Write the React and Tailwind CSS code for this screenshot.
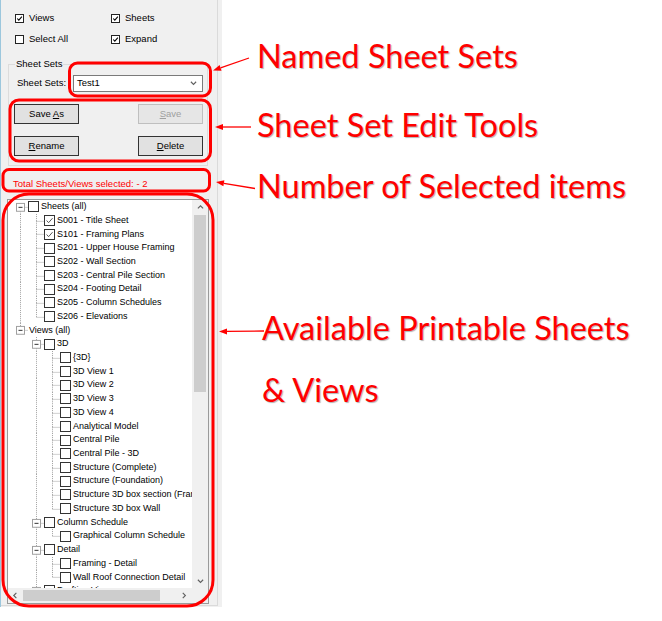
import React from "react";

const TREE = [
  {
    label: "Sheets (all)",
    open: true,
    children: [
      { label: "S001 - Title Sheet", checked: true },
      { label: "S101 - Framing Plans", checked: true },
      { label: "S201 - Upper House Framing" },
      { label: "S202 - Wall Section" },
      { label: "S203 - Central Pile Section" },
      { label: "S204 - Footing Detail" },
      { label: "S205 - Column Schedules" },
      { label: "S206 - Elevations" },
    ],
  },
  {
    label: "Views (all)",
    noBox: true,
    open: true,
    children: [
      {
        label: "3D",
        open: true,
        children: [
          "{3D}",
          "3D View 1",
          "3D View 2",
          "3D View 3",
          "3D View 4",
          "Analytical Model",
          "Central Pile",
          "Central Pile - 3D",
          "Structure (Complete)",
          "Structure (Foundation)",
          "Structure 3D box section (Framing)",
          "Structure 3D box Wall",
        ].map((label) => ({ label })),
      },
      { label: "Column Schedule", open: true, children: [{ label: "Graphical Column Schedule" }] },
      { label: "Detail", open: true, children: [{ label: "Framing - Detail" }, { label: "Wall Roof Connection Detail" }] },
      { label: "Drafting View", open: true, children: [{ label: "Drafting 1" }] },
      { label: "Elevation", open: true, children: [{ label: "North" }] },
    ],
  },
];

function flatten(nodes, depth = 0, rails = [], out = []) {
  nodes.forEach((n, i) => {
    const last = i === nodes.length - 1;
    out.push({ ...n, depth, rails, last, first: depth === 0 && i === 0 });
    if (n.children && n.open) flatten(n.children, depth + 1, [...rails, !last], out);
  });
  return out;
}

const ROWS = flatten(TREE);

const ARROWS = [
  [249, 58, 213, 70.5],
  [251, 127, 215, 127],
  [255, 188.5, 216, 182],
  [264, 331, 219, 331.5],
];

function Tick({ color = "#000", width = 1.5 }) {
  return (
    <svg viewBox="0 0 10 10" className="h-full w-full">
      <polyline points="1.8,5 4,7.4 8.4,2.4" fill="none" stroke={color} strokeWidth={width} />
    </svg>
  );
}

function TopCheck({ checked, label }) {
  return (
    <div className="flex h-[12px] items-center gap-[5px]">
      <span className="flex h-[9px] w-[9px] shrink-0 items-center justify-center border border-[#222] bg-white">
        {checked && <Tick />}
      </span>
      <span>{label}</span>
    </div>
  );
}

function Button({ children, disabled }) {
  return (
    <div
      className={
        disabled
          ? "flex h-[20px] w-[65px] items-center justify-center border border-[#bfbfbf] bg-[#e6e6e6] text-[#a0a0a0]"
          : "flex h-[20px] w-[65px] items-center justify-center border border-[#333] bg-[#e1e1e1]"
      }
    >
      <span>{children}</span>
    </div>
  );
}

function Rail({ on }) {
  return (
    <svg viewBox="0 0 16 14" preserveAspectRatio="none" className="h-full w-[16px] shrink-0">
      {on && <line x1="8.5" y1="0" x2="8.5" y2="14" stroke="#a0a0a0" strokeDasharray="1 1" />}
    </svg>
  );
}

function Joint({ row }) {
  return (
    <svg viewBox="0 0 16 14" preserveAspectRatio="none" className="h-full w-[16px] shrink-0">
      {!row.first && <line x1="8.5" y1="0" x2="8.5" y2="7.5" stroke="#a0a0a0" strokeDasharray="1 1" />}
      {!row.last && <line x1="8.5" y1="7.5" x2="8.5" y2="14" stroke="#a0a0a0" strokeDasharray="1 1" />}
      <line x1="8.5" y1="7.5" x2="16" y2="7.5" stroke="#a0a0a0" strokeDasharray="1 1" />
      {row.children && (
        <g>
          <rect x="4.5" y="3.5" width="8" height="8" fill="#fff" stroke="#a0a0a0" />
          <line x1="6.5" y1="7.5" x2="10.5" y2="7.5" stroke="#333" />
        </g>
      )}
    </svg>
  );
}

function TreeRow({ row }) {
  return (
    <div className="flex h-[13.72px] shrink-0 items-center whitespace-nowrap pl-[4px]">
      {row.rails.map((on, i) => (
        <Rail key={i} on={on} />
      ))}
      <Joint row={row} />
      {row.noBox ? (
        <span className="ml-[1px]">{row.label}</span>
      ) : (
        <>
          <span className="flex h-[11px] w-[11px] shrink-0 items-center justify-center border border-[#333] bg-white">
            {row.checked && <Tick color="#555" width={1.1} />}
          </span>
          <span className="ml-[2px]">{row.label}</span>
        </>
      )}
    </div>
  );
}

function Chevron({ dir = "down" }) {
  const pts = {
    up: "1,5 4,2 7,5",
    down: "1,2 4,5 7,2",
    left: "5,1 2,4 5,7",
    right: "2,1 5,4 2,7",
  }[dir];
  return (
    <svg viewBox="0 0 8 8" className="h-[7px] w-[7px]">
      <polyline points={pts} fill="none" stroke="#606060" strokeWidth="1.3" />
    </svg>
  );
}

function Arrow({ a: [x1, y1, x2, y2] }) {
  const dx = x2 - x1;
  const dy = y2 - y1;
  const len = Math.hypot(dx, dy);
  const ux = dx / len;
  const uy = dy / len;
  const bx = x2 - ux * 8;
  const by = y2 - uy * 8;
  const px = -uy * 3;
  const py = ux * 3;
  return (
    <g>
      <line x1={x1} y1={y1} x2={bx} y2={by} stroke="#ff0000" strokeWidth="1.3" />
      <polygon points={`${x2},${y2} ${bx + px},${by + py} ${bx - px},${by - py}`} fill="#ff0000" />
    </g>
  );
}

export default function App() {
  return (
    <div className="relative flex h-[621px] w-[662px] overflow-hidden bg-white">
      {/* left dialog panel */}
      <div className="h-[607px] w-[222px] shrink-0 border-l border-[#9cc7dd] bg-[#f0f0f0] font-['Liberation_Sans',Arial,sans-serif] text-[9.5px] text-black">
        <div className="h-[606px] w-[217px] border-b border-r border-[#dadada]">
          <div className="grid grid-cols-[96px_1fr] gap-y-[9px] pl-[14px] pt-[12px]">
            <TopCheck checked label="Views" />
            <TopCheck checked label="Sheets" />
            <TopCheck label="Select All" />
            <TopCheck checked label="Expand" />
          </div>

          <fieldset className="ml-[7px] mt-[13px] w-[200px] border border-[#dcdcdc] px-0 pb-[9px]">
            <legend className="ml-[6px] px-[1px] leading-[12px]">Sheet Sets</legend>
            <div className="mt-[5px] flex items-center pl-[8px]">
              <span className="w-[56px]">Sheet Sets:</span>
              <div className="flex h-[17px] w-[130px] items-center justify-between border border-[#7a7a7a] bg-white pl-[3px] pr-[5px]">
                <span>Test1</span>
                <Chevron />
              </div>
            </div>
            <div className="mt-[12px] flex w-[194px] justify-between pl-[5px]">
              <Button>
                Save <span className="underline">A</span>s
              </Button>
              <Button disabled>
                <span className="underline">S</span>ave
              </Button>
            </div>
            <div className="mt-[12px] flex w-[194px] justify-between pl-[5px]">
              <Button>
                <span className="underline">R</span>ename
              </Button>
              <Button>
                <span className="underline">D</span>elete
              </Button>
            </div>
          </fieldset>

          <div className="mt-[12px] pl-[12px] leading-[12px] text-[#ff0000]">Total Sheets/Views selected: - 2</div>

          {/* tree view */}
          <div className="ml-[6px] mt-[9px] flex h-[405px] w-[202px] flex-col border border-[#9a9a9a] bg-white text-[9px]">
            <div className="flex h-[388px]">
              <div className="flex w-[184px] flex-col overflow-hidden">
                {ROWS.map((row, i) => (
                  <TreeRow key={i} row={row} />
                ))}
              </div>
              <div className="flex w-[16px] flex-col bg-[#f0f0f0]">
                <div className="flex h-[15px] items-center justify-center">
                  <Chevron dir="up" />
                </div>
                <div className="mx-auto h-[177px] w-[12px] bg-[#cdcdcd]" />
                <div className="flex-1" />
                <div className="flex h-[14px] items-center justify-center">
                  <Chevron dir="down" />
                </div>
              </div>
            </div>
            <div className="flex h-[15px] bg-[#f0f0f0]">
              <div className="flex w-[15px] items-center justify-center">
                <Chevron dir="left" />
              </div>
              <div className="flex flex-1 items-center">
                <div className="h-[11px] w-[137px] bg-[#cdcdcd]" />
              </div>
              <div className="flex w-[15px] items-center justify-center">
                <Chevron dir="right" />
              </div>
              <div className="w-[16px]" />
            </div>
          </div>
        </div>
      </div>

      {/* callout labels */}
      <div className="flex flex-col pl-[35px] pt-[40px] font-['Lato','Open_Sans',sans-serif] text-[32.5px] leading-none text-[#ff0000] [text-shadow:1px_1px_1px_rgba(0,0,0,0.3)]">
        <div className="whitespace-nowrap">Named Sheet Sets</div>
        <div className="mt-[36px] whitespace-nowrap">Sheet Set Edit Tools</div>
        <div className="mt-[29px] whitespace-nowrap">Number of Selected items</div>
        <div className="ml-[5px] mt-[109px] whitespace-nowrap">Available Printable Sheets</div>
        <div className="ml-[5px] mt-[30px] whitespace-nowrap">&amp; Views</div>
      </div>

      {/* annotation marks */}
      <svg className="pointer-events-none absolute inset-0" width="662" height="621" viewBox="0 0 662 621">
        <g fill="none" stroke="#ff0000" strokeWidth="3">
          <rect x="69.5" y="63" width="141" height="33" rx="8" />
          <rect x="10" y="100" width="200.5" height="61" rx="9" />
          <rect x="3" y="169.5" width="206.5" height="21.5" rx="6" />
          <rect x="3" y="194" width="210" height="412" rx="26" />
        </g>
        {ARROWS.map((a, i) => (
          <Arrow key={i} a={a} />
        ))}
      </svg>
    </div>
  );
}
